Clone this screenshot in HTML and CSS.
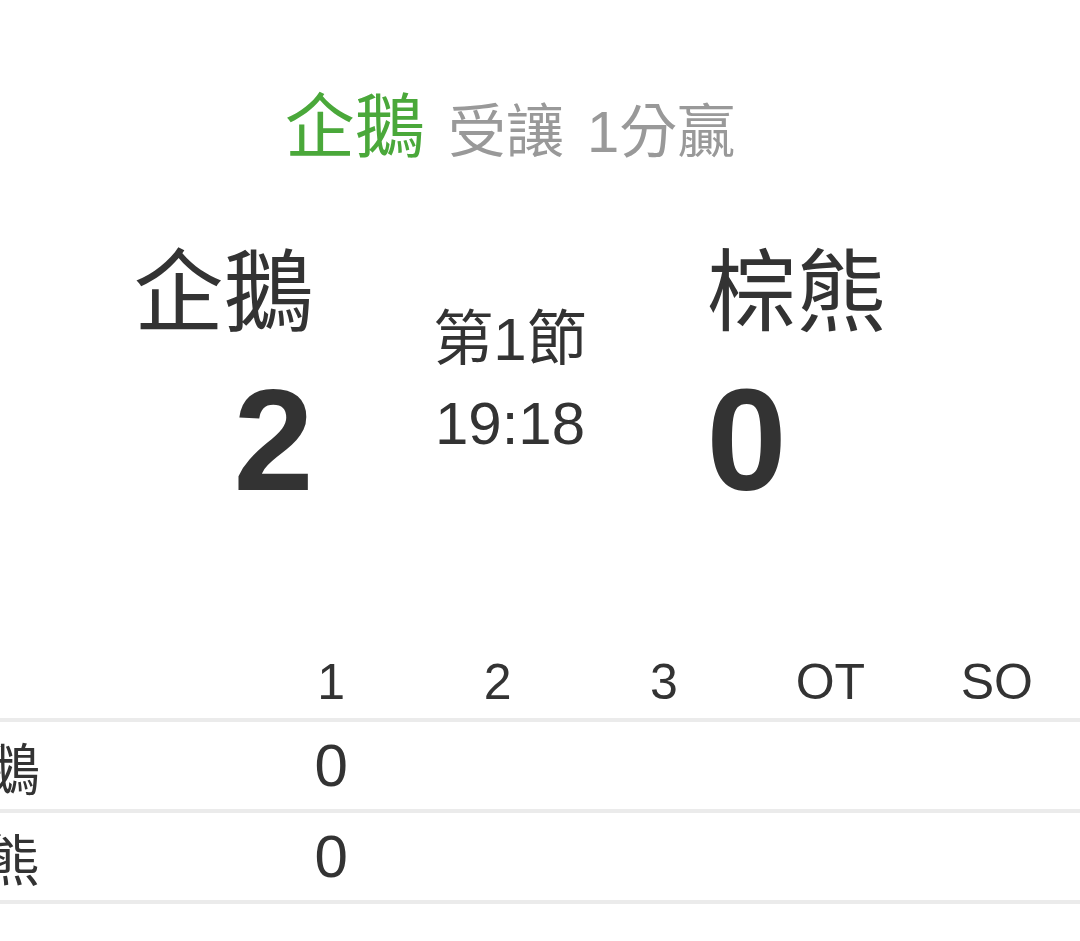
FILE: index.html
```html
<!DOCTYPE html>
<html lang="zh-Hant">
<head>
<meta charset="utf-8">
<title>企鵝 vs 棕熊</title>
<link rel="stylesheet" href="styles.css">
</head>
<body>
<div class="page">
  <div class="headline"><span class="winner">企鵝</span> <span class="spread">受讓 1分贏</span></div>

  <div class="scoreboard">
    <div class="team team-home">
      <div class="team-name">企鵝</div>
      <div class="team-score">2</div>
    </div>
    <div class="status">
      <div class="period">第1節</div>
      <div class="clock">19:18</div>
    </div>
    <div class="team team-away">
      <div class="team-name">棕熊</div>
      <div class="team-score">0</div>
    </div>
  </div>

  <div class="linescore">
    <div class="ls-row ls-head">
      <div class="ls-name"></div>
      <div class="ls-cell">1</div>
      <div class="ls-cell">2</div>
      <div class="ls-cell">3</div>
      <div class="ls-cell">OT</div>
      <div class="ls-cell">SO</div>
    </div>
    <div class="ls-row">
      <div class="ls-name">企鵝</div>
      <div class="ls-cell">0</div>
      <div class="ls-cell"></div>
      <div class="ls-cell"></div>
      <div class="ls-cell"></div>
      <div class="ls-cell"></div>
    </div>
    <div class="ls-row">
      <div class="ls-name">棕熊</div>
      <div class="ls-cell">0</div>
      <div class="ls-cell"></div>
      <div class="ls-cell"></div>
      <div class="ls-cell"></div>
      <div class="ls-cell"></div>
    </div>
  </div>
</div>
</body>
</html>
```

FILE: styles.css
```css
html, body {
  margin: 0;
  padding: 0;
  background: #ffffff;
}

body {
  font-family: "Liberation Sans", "Noto Sans CJK TC", sans-serif;
  color: #333333;
  overflow: hidden;
}

.page {
  width: 1080px;
}

.headline {
  padding-top: 88px;
  padding-right: 60px;
  height: 80px;
  line-height: 80px;
  font-size: 58px;
  text-align: center;
  white-space: nowrap;
  word-spacing: 7px;
}

.winner {
  color: #4aa83a;
  font-size: 70px;
}

.spread {
  color: #999999;
}

.scoreboard {
  display: flex;
  margin-top: 67px;
  padding-right: 60px;
}

.team {
  flex: 1;
  display: flex;
  flex-direction: column;
}

.team-home {
  align-items: flex-end;
}

.team-away {
  align-items: flex-start;
}

.team-name {
  font-family: "Noto Sans CJK TC", sans-serif;
  font-size: 90px;
  line-height: 100px;
  height: 100px;
}

.team-score {
  margin-top: 31px;
  font-size: 144px;
  font-weight: bold;
  line-height: 150px;
  height: 150px;
}

.status {
  width: 393px;
  display: flex;
  flex-direction: column;
  align-items: center;
  padding-top: 70px;
}

.period {
  font-size: 60px;
  line-height: 70px;
  height: 70px;
}

.clock {
  margin-top: 14px;
  font-size: 60px;
  line-height: 70px;
  height: 70px;
}

.linescore {
  margin-top: 124px;
  margin-left: -72px;
  width: 1152px;
}

.ls-row {
  display: grid;
  grid-template-columns: 320px repeat(5, 1fr);
  align-items: center;
  height: 87px;
  border-bottom: 4px solid #ebebeb;
}

.ls-head {
  height: 72px;
  padding-top: 6px;
  font-size: 50px;
}

.ls-row:not(.ls-head) {
  font-size: 60px;
}

.ls-name {
  font-family: "Noto Sans CJK TC", sans-serif;
  font-size: 56px;
}

.ls-cell {
  text-align: center;
}
```
